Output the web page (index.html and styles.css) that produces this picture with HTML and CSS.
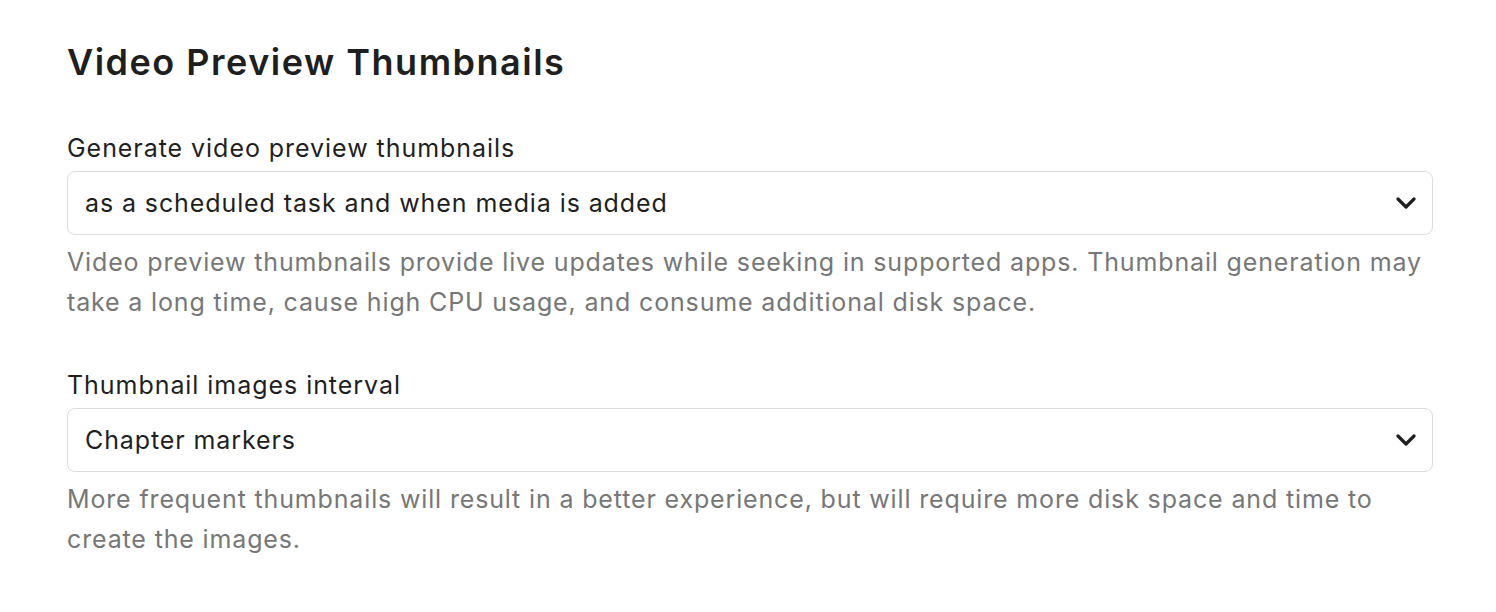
FILE: index.html
```html
<!DOCTYPE html>
<html lang="en">
<head>
  <meta charset="UTF-8" />
  <meta name="viewport" content="width=device-width, initial-scale=1.0"/>
  <title>Video Preview Thumbnails</title>
  <link rel="stylesheet" href="styles.css">
</head>
<body>
  <div class="settings">
    <h1 class="settings-title">Video Preview Thumbnails</h1>

    <div class="field">
      <label class="field-label" for="generateSelect">Generate video preview thumbnails</label>
      <div class="select-box">
        <select id="generateSelect" class="select">
          <option>as a scheduled task and when media is added</option>
          <option>as a scheduled task</option>
          <option>never</option>
        </select>
        <svg class="chevron" viewBox="0 0 20 12" aria-hidden="true">
          <path d="M2 2l8 8 8-8"/>
        </svg>
      </div>
      <p class="field-help">Video preview thumbnails provide live updates while seeking in supported apps. Thumbnail generation may take a long time, cause high CPU usage, and consume additional disk space.</p>
    </div>

    <div class="field">
      <label class="field-label" for="intervalSelect">Thumbnail images interval</label>
      <div class="select-box">
        <select id="intervalSelect" class="select">
          <option>Chapter markers</option>
          <option>Every 2 seconds</option>
          <option>Every 5 seconds</option>
        </select>
        <svg class="chevron" viewBox="0 0 20 12" aria-hidden="true">
          <path d="M2 2l8 8 8-8"/>
        </svg>
      </div>
      <p class="field-help">More frequent thumbnails will result in a better experience, but will require more disk space and time to create the images.</p>
    </div>
  </div>
</body>
</html>
```

FILE: styles.css
```css
body {
  margin: 0;
  padding: 0;
  background: #fff;
  color: #1f1f1f;
  font-family: Inter, "Noto Sans", sans-serif;
}

.settings {
  padding: 40px 63px 0 67px;
}

.settings-title {
  margin: 0 0 46px 0;
  font-size: 36px;
  line-height: 44px;
  font-weight: 600;
  letter-spacing: 1.5px;
}

/* Each setting: label, select, help text */
.field {
  display: flex;
  flex-direction: column;
  margin-bottom: 45px;
}

.field-label {
  font-size: 25px;
  line-height: 36px;
  letter-spacing: 0.95px;
  margin-bottom: 5px;
}

.select-box {
  position: relative;
}

.select {
  appearance: none;
  -webkit-appearance: none;
  width: 100%;
  height: 64px;
  box-sizing: border-box;
  padding: 0 60px 0 17px;
  border: 1px solid #dcdcdc;
  border-radius: 8px;
  background: #fff;
  color: #1f1f1f;
  font-family: Inter, "Noto Sans", sans-serif;
  font-size: 25px;
  letter-spacing: 0.9px;
}

.chevron {
  position: absolute;
  right: 17px;
  top: 26px;
  width: 20px;
  height: 12px;
  fill: none;
  stroke: #1f1f1f;
  stroke-width: 3.2;
  stroke-linecap: round;
  stroke-linejoin: round;
  pointer-events: none;
}

.field-help {
  margin: 7px -4px 0 0;
  font-size: 25px;
  line-height: 40px;
  letter-spacing: 0.85px;
  color: #777;
}
```
